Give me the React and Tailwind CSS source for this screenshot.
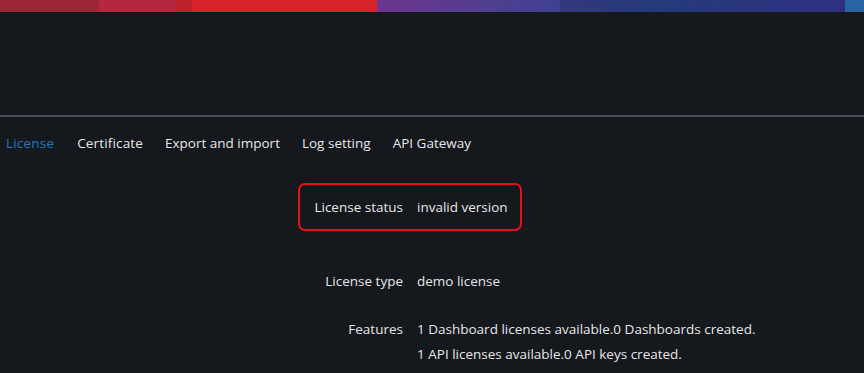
export default function App() {
  const font = { fontFamily: '"Open Sans", "Noto Sans", sans-serif' };
  return (
    <div className="w-[864px] h-[373px] overflow-hidden bg-[#15181c] text-[13.5px] text-[#e6e7e9]" style={font}>
      <div className="flex h-[12px]">
        <div className="w-[99px] bg-[#9b2535]" />
        <div className="w-[77px] bg-[#b4283f]" />
        <div className="w-[16px] bg-[#be2229]" />
        <div className="w-[185px] bg-[#d62229]" />
        <div className="w-[183px] bg-gradient-to-r from-[#6b3590] to-[#3c4192]" />
        <div className="w-[80px] bg-gradient-to-r from-[#32397c] to-[#26397a]" />
        <div className="w-[205px] bg-gradient-to-r from-[#243a7b] to-[#2d3082]" />
        <div className="flex-1 bg-[#2763a5]" />
      </div>
      <div className="h-[103px]" />
      <div className="h-[2px] bg-[#4a4f57]" />
      <div className="flex gap-[22px] pl-[6px] pt-[16px] h-[52px] leading-[20px]">
        <span className="text-[#1f7ac4] tracking-[0.2px] mr-[1px]">License</span>
        <span className="tracking-[0.15px]">Certificate</span>
        <span>Export and import</span>
        <span>Log setting</span>
        <span>API Gateway</span>
      </div>
      <div className="ml-[298px] pt-[14px] flex flex-col">
        <div className="flex w-fit items-center h-[48px] px-3 border-2 border-[#e5121b] rounded-[7px]">
          <span className="w-[91px] text-right whitespace-nowrap">License status</span>
          <span className="ml-[14px] whitespace-nowrap">invalid version</span>
        </div>
        <div className="flex items-center h-[24px] mt-[38px] px-[14px]">
          <span className="w-[91px] text-right whitespace-nowrap">License type</span>
          <span className="ml-[14px] whitespace-nowrap">demo license</span>
        </div>
        <div className="flex mt-[24px] px-[14px] leading-[25px]">
          <span className="w-[91px] text-right whitespace-nowrap">Features</span>
          <div className="ml-[14px] flex flex-col whitespace-nowrap">
            <span>1 Dashboard licenses available.0 Dashboards created.</span>
            <span>1 API licenses available.0 API keys created.</span>
          </div>
        </div>
      </div>
    </div>
  );
}
